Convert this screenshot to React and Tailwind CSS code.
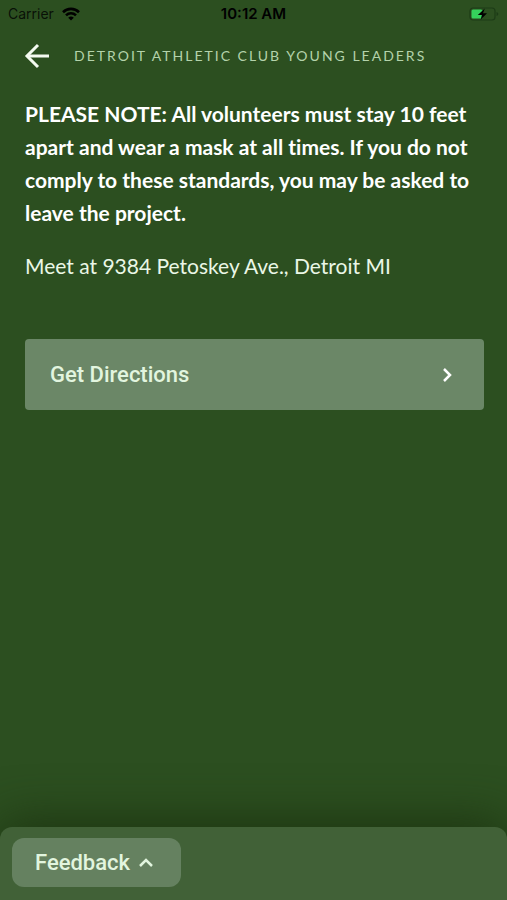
import { ChevronRight, ChevronUp } from 'lucide-react';

const StatusBar = () => (
  <div className="grid grid-cols-3 items-center h-7 px-2 font-['Inter',sans-serif] text-sm text-black">
    <div className="flex items-center gap-2 text-black/80">
      <span>Carrier</span>
      <svg className="w-[18px] h-[14px] text-black" viewBox="0 0 18 14" fill="none" stroke="currentColor" strokeWidth="2.6">
        <path d="M1 5.2a11.4 11.4 0 0 1 16 0" />
        <path d="M4 8.3a7.1 7.1 0 0 1 10 0" />
        <path d="M9 13.6 6.2 10.8a4 4 0 0 1 5.6 0z" fill="currentColor" stroke="none" />
      </svg>
    </div>
    <span className="text-center text-[15px] font-semibold">10:12 AM</span>
    <svg className="justify-self-end w-[30px] h-[14px]" viewBox="0 0 30 14" fill="none">
      <rect x="1" y="1" width="25" height="12" rx="3" stroke="#1d3c17" strokeWidth="1.2" />
      <path d="M27.5 5v4q1.8-.6 1.8-2t-1.8-2z" fill="#1d3c17" />
      <rect x="2.5" y="2.5" width="11" height="9" rx="1.5" fill="#35d25b" />
      <path d="M15.8 1.5 8.8 8h4.1l-1.3 4.8L18 6.2h-4z" fill="#000" />
    </svg>
  </div>
);

const Header = ({ title }) => (
  <header className="flex items-center gap-6 h-14 px-6">
    <button type="button" aria-label="Back" className="text-[#f4faf0]">
      <svg className="w-[26px] h-[26px]" viewBox="0 0 26 26" fill="none" stroke="currentColor" strokeWidth="3">
        <path d="M25 13H3.5" />
        <path d="M14 2 3 13l11 11" />
      </svg>
    </button>
    <h1 className="text-sm tracking-[2px] uppercase whitespace-nowrap text-[#b4d3ab]">{title}</h1>
  </header>
);

const App = () => {
  return (
    <div className="flex flex-col min-h-screen bg-[#2c4f20] font-['Lato',sans-serif]">
      <StatusBar />
      <Header title="Detroit Athletic Club Young Leaders" />

      <main className="flex-1 pl-[25px] pr-[23px] pt-[13px] text-[21px] leading-[33px] [font-variant-ligatures:none]">
        <p className="font-bold text-white">
          PLEASE NOTE: All volunteers must stay 10 feet apart and wear a mask at all times. If you do not comply to these standards, you may be asked to leave the project.
        </p>
        <p className="mt-5 text-[#eaf7e6]">Meet at 9384 Petoskey Ave., Detroit MI</p>

        <button
          type="button"
          className="flex items-center justify-between w-full h-[71px] mt-[57px] px-[25px] rounded-sm bg-[#6b8767] font-['Roboto',sans-serif] text-[22px] font-medium text-[#e2f5df]"
        >
          Get Directions
          <ChevronRight className="w-6 h-6 text-white" strokeWidth={2.5} strokeLinecap="butt" strokeLinejoin="miter" />
        </button>
      </main>

      <footer className="px-3 pt-[11px] pb-[13px] rounded-t-xl bg-[#416137] shadow-[0_-4px_50px_#1c3310]">
        <button
          type="button"
          className="flex items-center gap-1 h-[49px] px-[23px] rounded-xl bg-[#658160] font-['Roboto',sans-serif] text-[22px] font-medium text-[#e2f5df]"
        >
          Feedback
          <ChevronUp className="w-6 h-6" strokeWidth={2.5} strokeLinecap="butt" strokeLinejoin="miter" />
        </button>
      </footer>
    </div>
  );
};

export default App;
